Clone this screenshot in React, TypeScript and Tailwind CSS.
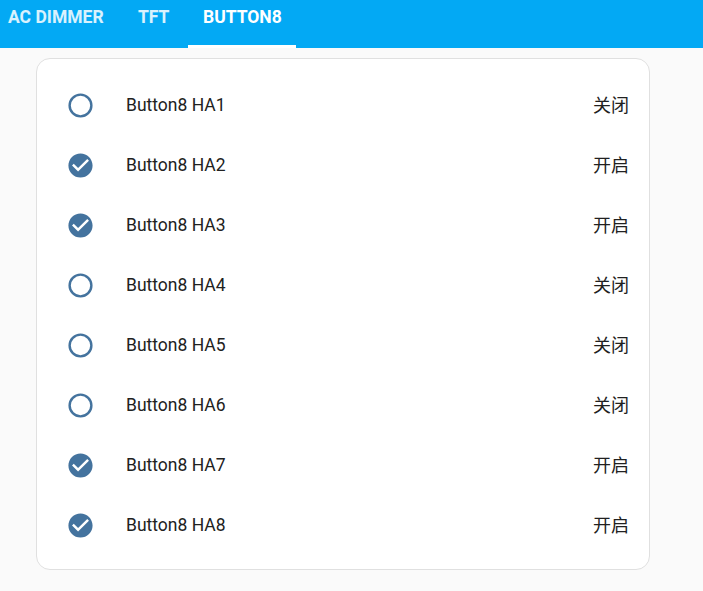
import React from "react";

const items = [
  { name: "Button8 HA1", on: false },
  { name: "Button8 HA2", on: true },
  { name: "Button8 HA3", on: true },
  { name: "Button8 HA4", on: false },
  { name: "Button8 HA5", on: false },
  { name: "Button8 HA6", on: false },
  { name: "Button8 HA7", on: true },
  { name: "Button8 HA8", on: true },
];

function Icon({ on }: { on: boolean }) {
  return (
    <svg viewBox="0 0 24 24" className="w-[29px] h-[29px]" fill="#44739e">
      {on ? (
        <path d="M12 2C6.5 2 2 6.5 2 12S6.5 22 12 22 22 17.5 22 12 17.5 2 12 2M10 17L5 12L6.41 10.59L10 14.17L17.59 6.58L19 8L10 17Z" />
      ) : (
        <path d="M12,20A8,8 0 0,1 4,12A8,8 0 0,1 12,4A8,8 0 0,1 20,12A8,8 0 0,1 12,20M12,2A10,10 0 0,0 2,12A10,10 0 0,0 12,22A10,10 0 0,0 22,12A10,10 0 0,0 12,2Z" />
      )}
    </svg>
  );
}

export default function App() {
  return (
    <div
      className="w-[703px] h-[591px] bg-[#fafafa] overflow-hidden"
      style={{ fontFamily: 'Roboto, "Noto Sans CJK SC", sans-serif' }}
    >
      <div className="h-[48px] bg-[#03a9f4] flex items-start pl-[8px]">
        <div className="text-[17.5px] font-bold text-white/85 pt-[4px] w-[130px]">AC DIMMER</div>
        <div className="text-[17.5px] font-bold text-white/85 pt-[4px] w-[50px]">TFT</div>
        <div className="relative h-[48px] w-[108px] pl-[15px] text-[17.5px] font-bold text-white pt-[4px] whitespace-nowrap">
          BUTTON8
          <div className="absolute left-0 right-0 bottom-0 h-[3px] bg-white" />
        </div>
      </div>
      <div className="mx-[36px] mt-[10px] w-[614px] bg-white border border-[#e0e0e0] rounded-[14px] pt-[16px] pb-[14px]">
        {items.map((it) => (
          <div key={it.name} className="h-[60px] flex items-center pl-[29px] pr-[20px]">
            <Icon on={it.on} />
            <div className="ml-[31px] flex-1 text-[17.5px] text-[#212121]">{it.name}</div>
            <div className="text-[18px] text-[#212121]">{it.on ? "开启" : "关闭"}</div>
          </div>
        ))}
      </div>
    </div>
  );
}
